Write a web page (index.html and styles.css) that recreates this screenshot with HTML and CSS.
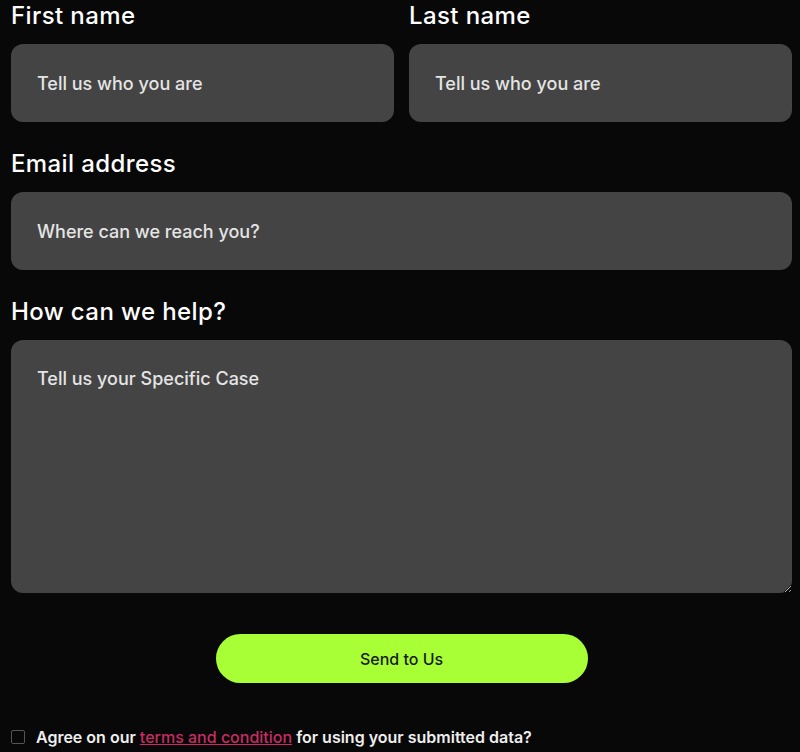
FILE: index.html
```html
<!DOCTYPE html>
<html>
  <head>
    <meta charset="UTF-8">
    <link rel="stylesheet" href="styles.css">
  </head>
  <body>
    <form class="contact">
      <div class="row">
        <label class="field">
          <span class="field-label">First name</span>
          <input class="input" type="text" placeholder="Tell us who you are" />
        </label>
        <label class="field">
          <span class="field-label">Last name</span>
          <input class="input" type="text" placeholder="Tell us who you are" />
        </label>
      </div>
      <label class="field">
        <span class="field-label">Email address</span>
        <input class="input" type="email" placeholder="Where can we reach you?" />
      </label>
      <label class="field">
        <span class="field-label">How can we help?</span>
        <textarea class="input textarea" placeholder="Tell us your Specific Case"></textarea>
      </label>
      <div class="actions">
        <button type="button" class="btn-send">Send to Us</button>
      </div>
      <label class="agree">
        <input type="checkbox" class="agree-box" />
        <span>Agree on our <a href="#">terms and condition</a> for using your submitted data?</span>
      </label>
    </form>
  </body>
</html>
```

FILE: styles.css
```css
html, body {
  margin: 0;
  padding: 0;
  background: #080808;
  color: #fff;
  font-family: Inter, "Noto Sans", sans-serif;
}
* {
  box-sizing: border-box;
}
.contact {
  padding: 2px 8px 0 11px;
  display: flex;
  flex-direction: column;
  gap: 28px;
}
.row {
  display: grid;
  grid-template-columns: 1fr 1fr;
  gap: 15px;
}
.field {
  display: flex;
  flex-direction: column;
  gap: 14px;
}
.field-label {
  font-size: 24px;
  line-height: 28px;
  font-weight: 500;
  letter-spacing: 0.4px;
}
.input {
  width: 100%;
  height: 78px;
  border: none;
  outline: none;
  border-radius: 12px;
  background: #444;
  color: #fff;
  padding: 0 26px;
  font-family: inherit;
  font-size: 18px;
  font-weight: 500;
}
.input::placeholder {
  color: #e4e4e4;
}
.textarea {
  height: 253px;
  padding: 27px 26px;
  line-height: 24px;
  resize: vertical;
}
.actions {
  display: flex;
  justify-content: center;
  padding-top: 13px;
}
.btn-send {
  width: 372px;
  height: 49px;
  border: none;
  border-radius: 25px;
  background: #a9ff36;
  color: #1a1a1a;
  font-family: inherit;
  font-size: 16px;
  font-weight: 500;
  cursor: pointer;
}
.agree {
  display: flex;
  align-items: center;
  gap: 11px;
  margin-top: 16px;
  font-size: 16px;
  font-weight: 600;
  color: #eee;
}
.agree-box {
  appearance: none;
  margin: 0;
  width: 14px;
  height: 14px;
  border: 1px solid #555;
  border-radius: 2px;
  background: transparent;
}
.agree a {
  color: #c72c62;
  font-weight: 500;
}
```
